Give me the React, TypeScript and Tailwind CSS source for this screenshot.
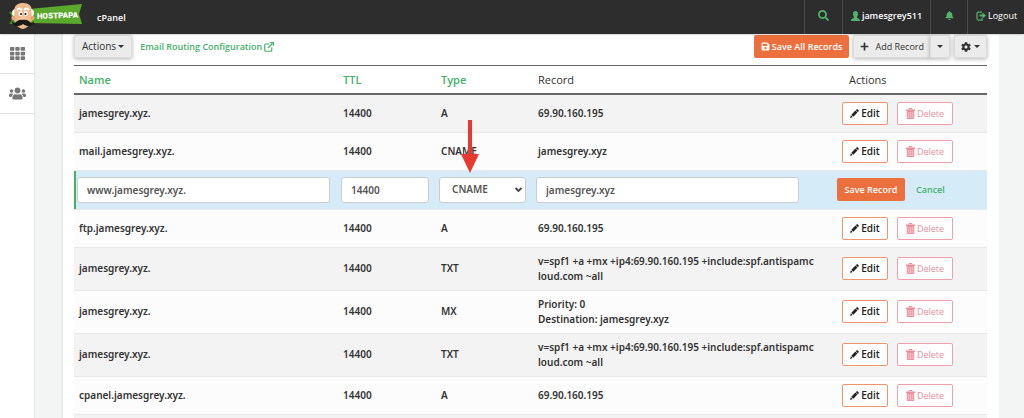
import { FaBell, FaCog, FaPlus, FaSave, FaSearch, FaTh, FaUsers } from 'react-icons/fa';

type DnsRecord = {
    name: string;
    ttl: string;
    type: string;
    lines: string[];
    editing?: boolean;
};

const records: DnsRecord[] = [
    { name: 'jamesgrey.xyz.', ttl: '14400', type: 'A', lines: ['69.90.160.195'] },
    { name: 'mail.jamesgrey.xyz.', ttl: '14400', type: 'CNAME', lines: ['jamesgrey.xyz'] },
    { name: 'www.jamesgrey.xyz.', ttl: '14400', type: 'CNAME', lines: ['jamesgrey.xyz'], editing: true },
    { name: 'ftp.jamesgrey.xyz.', ttl: '14400', type: 'A', lines: ['69.90.160.195'] },
    { name: 'jamesgrey.xyz.', ttl: '14400', type: 'TXT', lines: ['v=spf1 +a +mx +ip4:69.90.160.195 +include:spf.antispamcloud.com ~all'] },
    { name: 'jamesgrey.xyz.', ttl: '14400', type: 'MX', lines: ['Priority: 0', 'Destination: jamesgrey.xyz'] },
    { name: 'jamesgrey.xyz.', ttl: '14400', type: 'TXT', lines: ['v=spf1 +a +mx +ip4:69.90.160.195 +include:spf.antispamcloud.com ~all'] },
    { name: 'cpanel.jamesgrey.xyz.', ttl: '14400', type: 'A', lines: ['69.90.160.195'] },
];

const grayButton = 'flex h-[23px] items-center border border-[#dcdcdc] bg-[#ebebeb] text-[#333] shadow-[0_1px_4px_rgba(0,0,0,0.3)]';
const field = 'block h-[26px] rounded-[3px] border border-[#ccc] bg-white font-semibold text-[#555]';

function Logo() {
    return (
        <svg width="74" height="30" viewBox="0 0 74 30" role="img" aria-label="HostPapa">
            <path d="M0 10 L10 9 V22 L0 22 L4 16 Z" fill="#3f8a22" />
            <path d="M20 7 L73 2 L70 12 L73 22 L20 21 Z" fill="#5aa82c" />
            <text x="28" y="17" fill="#fff" fontSize="8" fontWeight="900" fontFamily="Roboto, sans-serif" transform="rotate(-2 28 17)">HOSTPAPA</text>
            {/* face */}
            <path d="M5 10 C5 3 9 1 14 1 C20 1 23 4 23 10 V17 C23 21 19 26 14 27 C8 26 5 21 5 17 Z" fill="#efba8e" />
            <path d="M6 7 C2 8 2 13 5 15 Z M22 7 C26 8 26 13 23 15 Z" fill="#f5f5f5" />
            <circle cx="4.500" cy="16" r="2.200" fill="#e5a878" />
            <circle cx="23.500" cy="16" r="2.200" fill="#e5a878" />
            <path d="M8 8 Q10 5 13 8 M15 8 Q18 5 20 8" stroke="#fff" strokeWidth="2" fill="none" />
            <ellipse cx="11.500" cy="11.500" rx="2" ry="2.500" fill="#fff" />
            <ellipse cx="17" cy="11.500" rx="2" ry="2.500" fill="#fff" />
            <circle cx="12" cy="12" r="1.100" fill="#222" />
            <circle cx="16.500" cy="12" r="1.100" fill="#222" />
            <ellipse cx="14.200" cy="16" rx="3" ry="2.600" fill="#f3c7a0" />
            <path d="M14 18 C11 17 8 19 7 20 C6 21 4 21 3 19 C3 24 9 26 14 22 C19 26 25 24 25 19 C24 21 22 21 21 20 C20 19 17 17 14 18 Z" fill="#1c1a19" />
        </svg>
    );
}

function UserIcon() {
    return (
        <svg width="9" height="10" viewBox="0 0 18 20" fill="#4fb36c" aria-hidden="true">
            <path d="M9 0 C12 0 14 2 14 6 C14 9 13 10 12 12 C12 14 13 14 15 15 C17 16 18 17 18 20 H0 C0 17 1 16 3 15 C5 14 6 14 6 12 C5 10 4 9 4 6 C4 2 6 0 9 0 Z" />
        </svg>
    );
}

function LogoutIcon() {
    return (
        <svg width="10" height="10" viewBox="0 0 20 20" fill="none" stroke="#4fb36c" strokeWidth="2.500" aria-hidden="true">
            <path d="M12 2 H5 Q2 2 2 5 V15 Q2 18 5 18 H12 V14" />
            <path d="M7 9 H14" strokeWidth="4" />
            <path d="M13 3 L20 9 L13 15 Z" fill="#4fb36c" stroke="none" />
        </svg>
    );
}

function ExternalIcon() {
    return (
        <svg width="10" height="10" viewBox="0 0 20 20" fill="none" stroke="currentColor" strokeWidth="2.400" aria-hidden="true">
            <path d="M11 4 H4 Q1.500 4 1.500 6.500 V16 Q1.500 18.500 4 18.500 H13 Q15.500 18.500 15.500 16 V11" />
            <path d="M8 12 L17 3" />
            <path d="M12.500 1.200 H18.800 V7.500" />
        </svg>
    );
}

function PencilIcon() {
    return (
        <svg width="9" height="9" viewBox="0 0 20 20" fill="#222" aria-hidden="true">
            <path d="M0 20 L2 14 L6 18 Z M3 12.500 L12 3.500 L16.500 8 L7.500 17 Z M13 2.500 L15 0.500 Q16 0 17 0.800 L19.200 3 Q20 4 19.200 5 L17.500 7 Z" />
        </svg>
    );
}

function TrashIcon() {
    return (
        <svg width="9" height="11" viewBox="0 0 18 22" fill="none" stroke="#ea8e9c" aria-hidden="true">
            <path d="M0 4.500 H18" strokeWidth="3" />
            <path d="M6 3 V1 H12 V3" strokeWidth="2" />
            <path d="M2.500 7 V21 H15.500 V7 Z" fill="#f3bcc4" strokeWidth="2" />
            <path d="M6.500 8 V19 M11.500 8 V19" strokeWidth="1.500" />
        </svg>
    );
}

function Caret() {
    return <span className="h-0 w-0 border-x-[3px] border-t-[3px] border-x-transparent border-t-[#333]" />;
}

function Header() {
    return (
        <header className="relative z-10 flex h-[34px] shrink-0 items-center bg-[#2d2d2d] text-[9px] text-white shadow-[0_0_2px_rgba(0,0,0,0.4)]">
            <div className="flex flex-1 items-center gap-[14px] pl-[9px]">
                <Logo />
                <span className="font-semibold">cPanel</span>
            </div>
            <button aria-label="Search" className="flex h-full w-[38px] items-center justify-center border-l border-[#4a4a4a] pb-1 text-[#4fb36c]">
                <FaSearch size={11} />
            </button>
            <button className="flex h-full w-[88px] items-center justify-center gap-[2px] border-l border-[#4a4a4a] pb-[3px] font-semibold">
                <UserIcon />
                jamesgrey511
            </button>
            <button aria-label="Notifications" className="flex h-full w-[37px] items-center justify-center border-l border-[#4a4a4a] pb-1 text-[#4fb36c]">
                <FaBell size={9} />
            </button>
            <a href="#logout" className="flex h-full w-[57px] items-center gap-[2px] border-l border-[#4a4a4a] pb-[3px] pl-[8px]">
                <LogoutIcon />
                Logout
            </a>
        </header>
    );
}

function Sidebar() {
    return (
        <nav className="w-[35px] shrink-0 border-r border-[#e4e6e6] bg-white text-[#777]">
            <a href="#apps" aria-label="Apps" className="flex h-10 items-center justify-center border-b border-[#e2e2e2]">
                <FaTh size={15} />
            </a>
            <a href="#users" aria-label="Users" className="flex h-10 items-center justify-center border-b border-[#e2e2e2]">
                <FaUsers size={17} />
            </a>
        </nav>
    );
}

function Toolbar() {
    return (
        <div className="flex items-center pt-px pb-[7px] text-[9px]">
            <button className={`${grayButton} gap-[2px] rounded-[2px] px-[7px] text-[10px]`}>
                Actions
                <Caret />
            </button>
            <a href="#routing" className="ml-2 flex items-center gap-[2px] font-semibold text-[#45b06a]">
                Email Routing Configuration
                <ExternalIcon />
            </a>
            <div className="ml-auto flex gap-1">
                <button className="flex h-[23px] items-center gap-[2px] rounded-[2px] bg-[#ec6f3e] px-[7px] font-semibold text-white">
                    <FaSave size={9} />
                    Save All Records
                </button>
                <div className="flex">
                    <button className={`${grayButton} gap-[6px] rounded-l-[2px] px-[6px]`}>
                        <FaPlus size={9} />
                        Add Record
                    </button>
                    <button aria-label="More record types" className={`${grayButton} -ml-px w-5 justify-center rounded-r-[2px]`}>
                        <Caret />
                    </button>
                </div>
                <button aria-label="Settings" className={`${grayButton} w-[33px] justify-center gap-[3px] rounded-[2px]`}>
                    <FaCog size={10} />
                    <Caret />
                </button>
            </div>
        </div>
    );
}

function RecordRow({ record }: { record: DnsRecord }) {
    return (
        <tr className="border-b border-[#e8e8e8] odd:bg-[#f3f3f3] even:bg-[#fcfcfc]">
            <td className="px-[5px]">{record.name}</td>
            <td className="px-[5px]">{record.ttl}</td>
            <td className="px-[5px]">{record.type}</td>
            <td className="py-[6px] pr-4 pl-[5px] break-all">
                {record.lines.map((line) => (
                    <div key={line}>{line}</div>
                ))}
            </td>
            <td className="py-[7px] pl-[10px]">
                <div className="flex gap-[9px] font-['Open_Sans',sans-serif] text-[9px]">
                    <button className="flex h-[23px] w-[46px] items-center justify-center gap-[2px] rounded-[2px] border border-[#f0946f] bg-white text-[10px] font-semibold text-[#222]">
                        <PencilIcon />
                        Edit
                    </button>
                    <button className="flex h-[23px] w-[56px] items-center justify-center gap-[2px] rounded-[2px] border border-[#f0a0ac] bg-white font-normal text-[#ea8e9c]">
                        <TrashIcon />
                        Delete
                    </button>
                </div>
            </td>
        </tr>
    );
}

function EditRow({ record }: { record: DnsRecord }) {
    return (
        <tr className="border-b border-[#e8e8e8] bg-[#d6ebf8]">
            <td className="py-[6px] pr-2 pl-[3px] shadow-[inset_2px_0_0_#45b06a]">
                <input aria-label="Name" defaultValue={record.name} className={`${field} w-full px-[9px]`} />
            </td>
            <td className="pr-[7px] pl-[3px]">
                <input aria-label="TTL" defaultValue={record.ttl} className={`${field} w-full px-[9px]`} />
            </td>
            <td className="pr-[7px] pl-[3px]">
                <div className="relative">
                    <select aria-label="Type" defaultValue={record.type} className={`${field} w-full appearance-none pl-3`}>
                        <option>A</option>
                        <option>CNAME</option>
                        <option>MX</option>
                        <option>TXT</option>
                    </select>
                    <svg className="pointer-events-none absolute top-[10px] right-1" width="7" height="6" viewBox="0 0 7 6" fill="none" stroke="#444" strokeWidth="1.800" aria-hidden="true">
                        <path d="M0.500 1 L3.500 4 L6.500 1" />
                    </svg>
                    {/* red pointer */}
                    <svg className="pointer-events-none absolute bottom-[30px] left-[22px]" width="18" height="53" viewBox="0 0 18 53" fill="#e8392f" aria-hidden="true">
                        <path d="M7 0 H11 V34 H18 L9 53 L0 34 H7 Z" />
                    </svg>
                </div>
            </td>
            <td className="pr-[33px] pl-[3px]">
                <input aria-label="Record" defaultValue={record.lines[0]} className={`${field} w-full px-[9px]`} />
            </td>
            <td className="pl-[5px]">
                <div className="flex items-center gap-[11px] font-['Open_Sans',sans-serif] text-[9px]">
                    <button className="h-[23px] w-[68px] rounded-[2px] bg-[#ec6f3e] font-semibold text-white">Save Record</button>
                    <button className="font-semibold text-[#45b06a]">Cancel</button>
                </div>
            </td>
        </tr>
    );
}

export default function App() {
    return (
        <div className="flex h-screen flex-col overflow-hidden bg-[#f3f4f4] font-['Open_Sans',sans-serif] text-[11px] leading-[15px] text-[#333]">
            <Header />
            <div className="flex min-h-0 flex-1">
                <Sidebar />
                <main className="mr-[25px] ml-[26px] flex-1 border-l-2 border-[#e9ecec] bg-white pr-3 pl-[11px]">
                    <Toolbar />
                    <table className="w-full table-fixed border-collapse text-left">
                        <colgroup>
                            <col />
                            <col className="w-[98px]" />
                            <col className="w-[97px]" />
                            <col className="w-[299px]" />
                            <col className="w-[155px]" />
                        </colgroup>
                        <thead>
                            <tr className="h-7 border-t border-b-2 border-t-[#666] border-b-[#666]">
                                <th className="px-[5px] font-semibold text-[#45b06a]">Name</th>
                                <th className="px-[5px] font-semibold text-[#45b06a]">TTL</th>
                                <th className="px-[5px] font-semibold text-[#45b06a]">Type</th>
                                <th className="px-[5px] font-normal">Record</th>
                                <th className="pl-[17px] font-normal">Actions</th>
                            </tr>
                        </thead>
                        <tbody className="font-['Noto_Sans',sans-serif] text-[10px] font-semibold">
                            {records.map((record, i) =>
                                record.editing ? <EditRow key={i} record={record} /> : <RecordRow key={i} record={record} />
                            )}
                            <tr className="bg-[#f3f3f3]">
                                <td colSpan={5} className="h-[38px]" />
                            </tr>
                        </tbody>
                    </table>
                </main>
            </div>
        </div>
    );
}
